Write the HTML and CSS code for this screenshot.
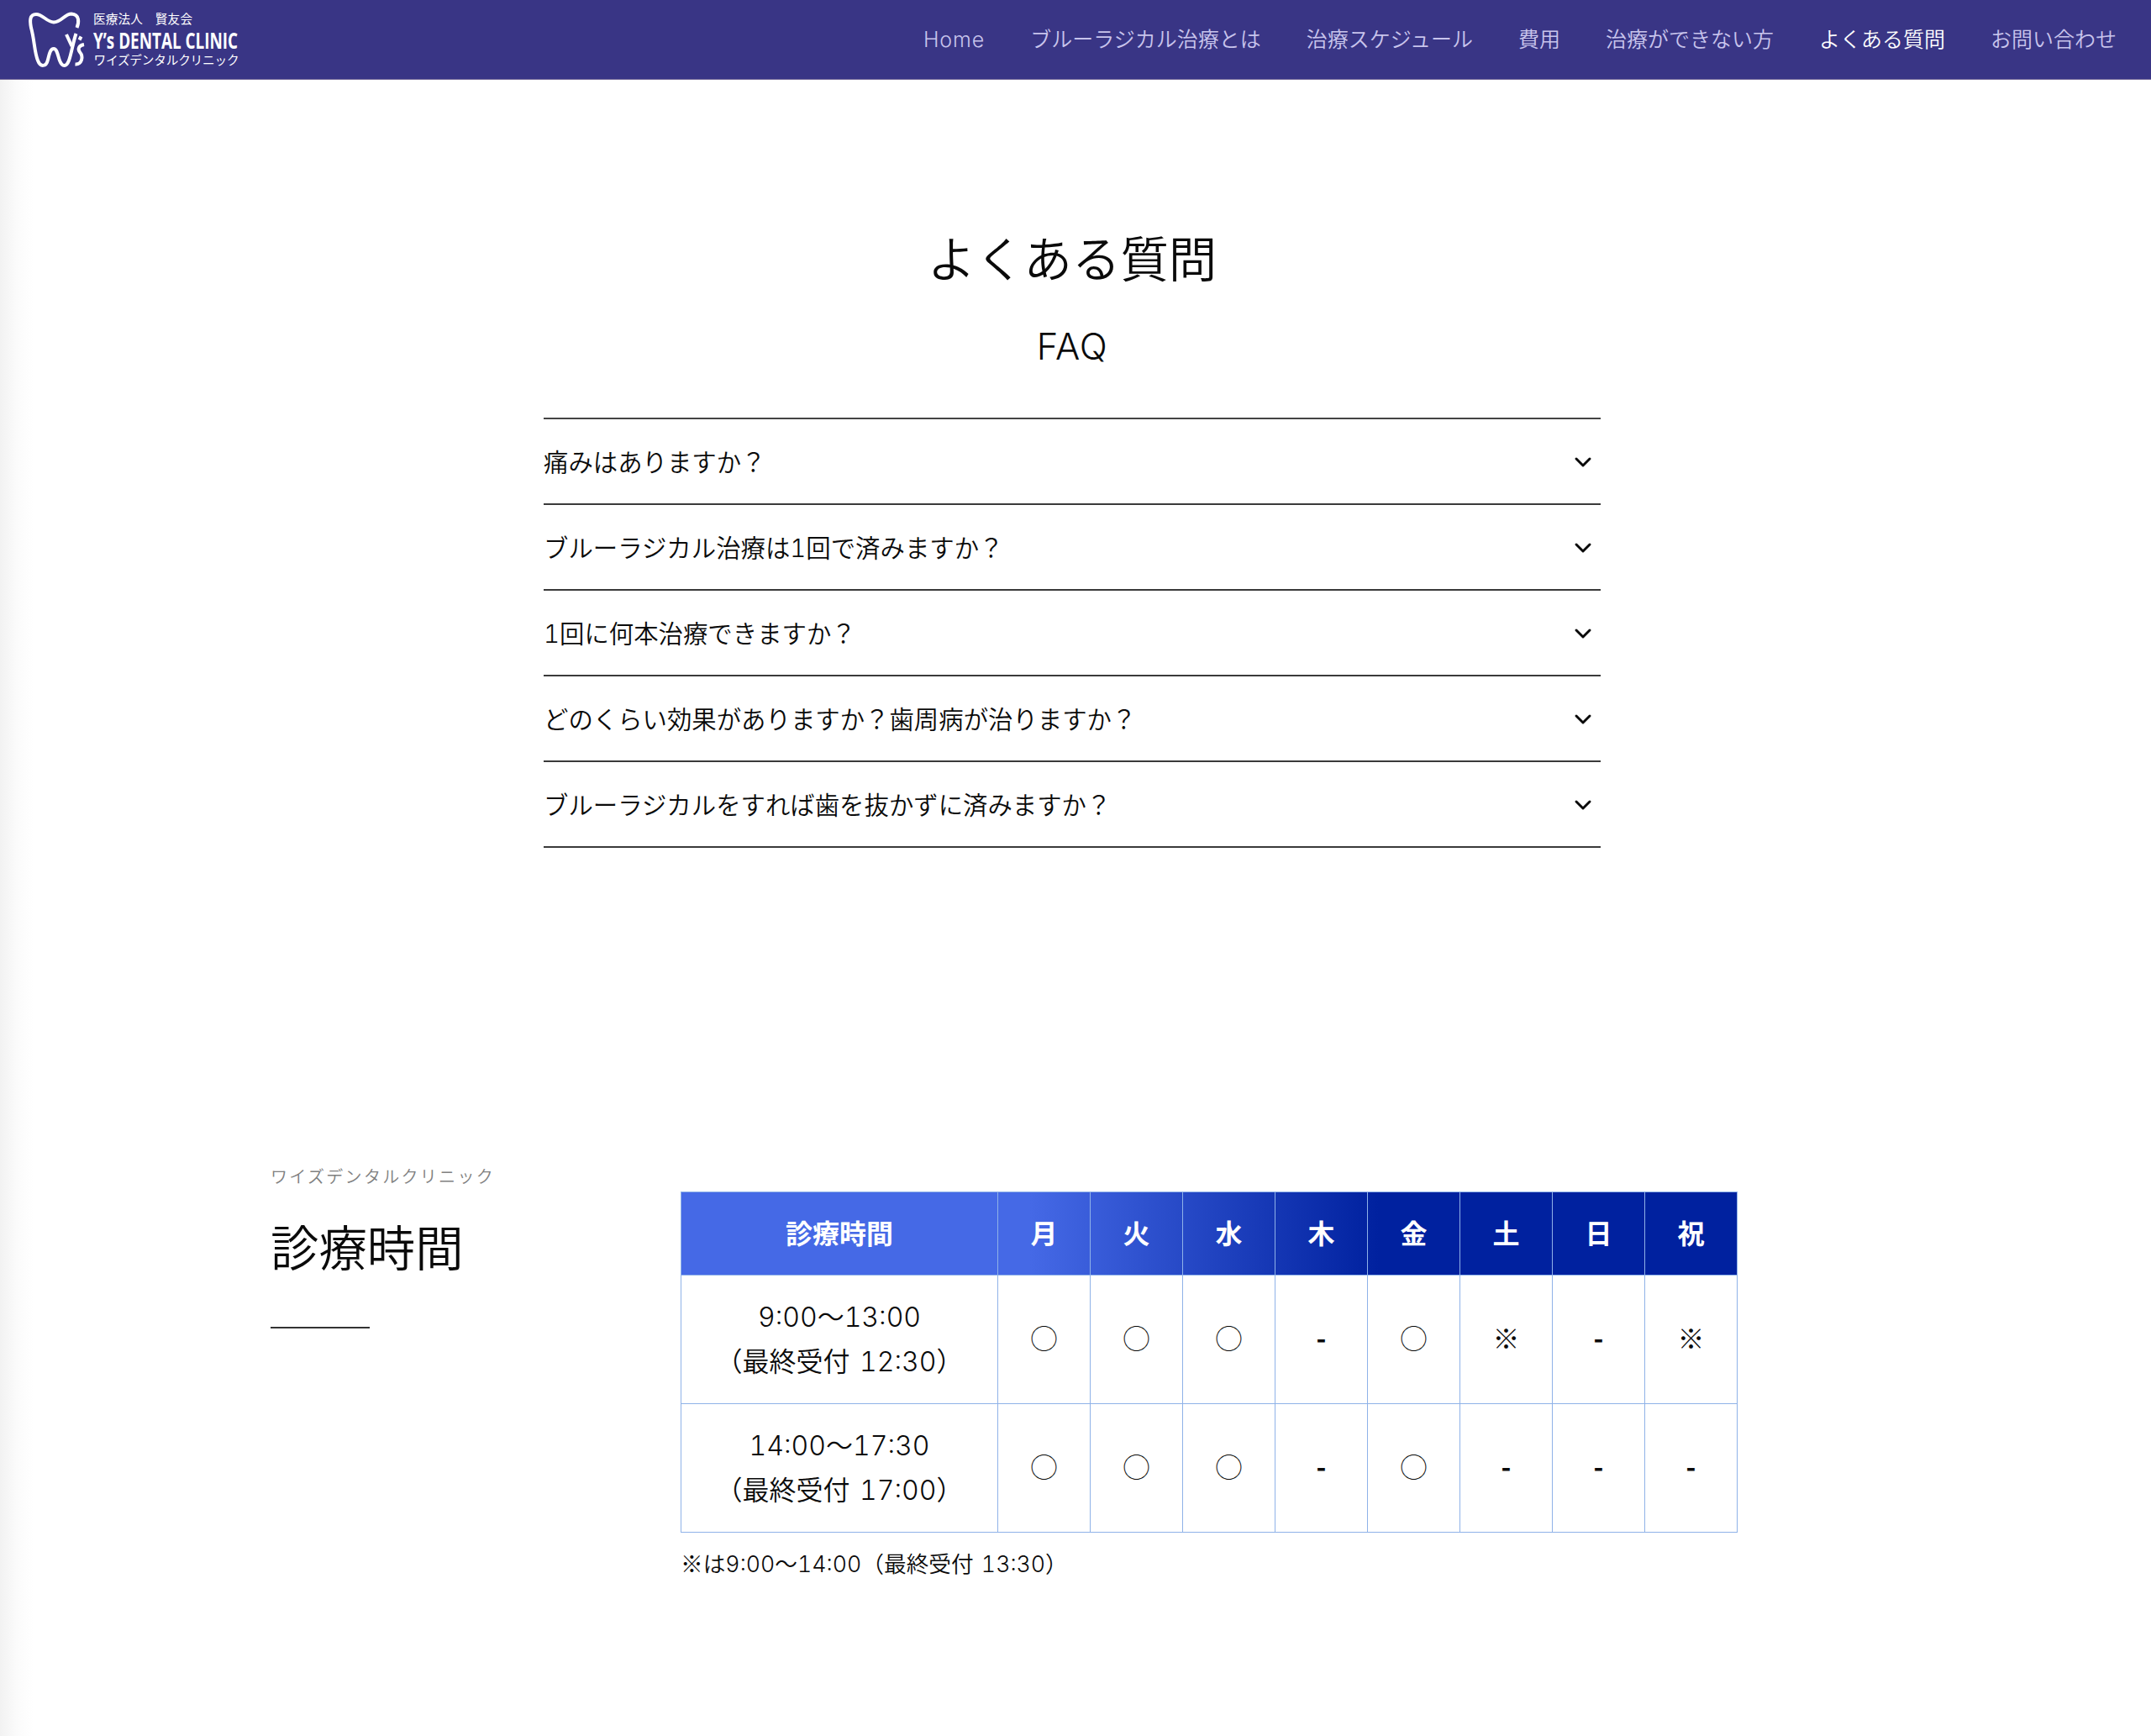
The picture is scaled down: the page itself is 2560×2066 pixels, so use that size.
FILE: index.html
```html
<!DOCTYPE html>
<html lang="ja">
<head>
	<meta charset="UTF-8">
	<meta name="viewport" content="width=device-width, initial-scale=1.0">
	<title>よくある質問</title>
	<link rel="stylesheet" href="styles.css">
</head>
<body>
<header class="header">
	<a class="logo">
		<svg width="262" height="80" viewBox="34 6 262 80">
			<g class="tooth">
				<path d="M91.500 32C94 26 95 16 85 15.500C77 15.500 73 25.500 64 25.500C56 25.500 51 16 43 16C35 16 35.500 24 37 32C41 46 41 62 45 71C48 79 55 79 57 70C59 62 60 57 64 57C68 57 69 66 71 71C74 79 79 79 82 71C85 63 87 49 90.500 39"/>
				<path d="M79 40L85.500 54"/>
				<path d="M96.500 42.500L94.500 46.500"/>
				<path d="M100 52C94 53 92 57 95 61C100 67 97 76 89.500 75.500"/>
			</g>
			<text class="logo-jp" x="111" y="27" textLength="118">医療法人　賢友会</text>
			<text class="logo-en" x="111" y="56.5" textLength="172" lengthAdjust="spacingAndGlyphs">Y’s DENTAL CLINIC</text>
			<text class="logo-jp" x="111.5" y="76" textLength="173">ワイズデンタルクリニック</text>
		</svg>
	</a>
	<ul class="nav">
		<li class="en">Home</li>
		<li>ブルーラジカル治療とは</li>
		<li>治療スケジュール</li>
		<li>費用</li>
		<li>治療ができない方</li>
		<li class="current">よくある質問</li>
		<li>お問い合わせ</li>
	</ul>
</header>
<main class="main">
	<section class="faq">
		<h2 class="title">よくある質問</h2>
		<p class="subtitle">FAQ</p>
		<ul class="faq-list">
			<li>痛みはありますか？<svg class="arrow" viewBox="0 0 22 14"><path d="M3 3l8 8 8-8"/></svg></li>
			<li>ブルーラジカル治療は1回で済みますか？<svg class="arrow" viewBox="0 0 22 14"><path d="M3 3l8 8 8-8"/></svg></li>
			<li>1回に何本治療できますか？<svg class="arrow" viewBox="0 0 22 14"><path d="M3 3l8 8 8-8"/></svg></li>
			<li>どのくらい効果がありますか？歯周病が治りますか？<svg class="arrow" viewBox="0 0 22 14"><path d="M3 3l8 8 8-8"/></svg></li>
			<li>ブルーラジカルをすれば歯を抜かずに済みますか？<svg class="arrow" viewBox="0 0 22 14"><path d="M3 3l8 8 8-8"/></svg></li>
		</ul>
	</section>
	<section class="hours">
		<div class="hours-head">
			<p class="label">ワイズデンタルクリニック</p>
			<h2 class="title">診療時間</h2>
		</div>
		<div class="hours-body">
			<table class="timetable">
				<thead>
					<tr><th class="time">診療時間</th><th>月</th><th>火</th><th>水</th><th>木</th><th>金</th><th>土</th><th>日</th><th>祝</th></tr>
				</thead>
				<tbody>
					<tr>
						<td class="time">9:00〜13:00<br>（最終受付 12:30）</td>
						<td>◯</td><td>◯</td><td>◯</td><td class="off">-</td><td>◯</td><td>※</td><td class="off">-</td><td>※</td>
					</tr>
					<tr>
						<td class="time">14:00〜17:30<br>（最終受付 17:00）</td>
						<td>◯</td><td>◯</td><td>◯</td><td class="off">-</td><td>◯</td><td class="off">-</td><td class="off">-</td><td class="off">-</td>
					</tr>
				</tbody>
			</table>
			<p class="note"><span class="mark">※</span>は9:00〜14:00（最終受付 13:30）</p>
		</div>
	</section>
</main>
</body>
</html>
```
FILE: styles.css
```css
* {
	box-sizing: border-box;
	margin: 0;
	padding: 0;
}
body {
	background: #fff;
	color: #0a0a0a;
	font-family: Inter, "Noto Sans CJK JP", sans-serif;
	font-weight: 350;
	font-variant-numeric: tabular-nums;
}
ul {
	list-style: none;
}

/* header */
.header {
	display: flex;
	justify-content: space-between;
	align-items: center;
	height: 95px;
	padding: 0 41px 0 34px;
	background: #393585;
	border-bottom: 1px solid #7a6f9c;
}
.logo svg {
	display: block;
	overflow: visible;
}
.tooth {
	fill: none;
	stroke: #fff;
	stroke-width: 4;
	stroke-linejoin: round;
}
.logo-jp {
	fill: #fff;
	font: 400 14.6px "Noto Sans CJK JP", sans-serif;
}
.logo-en {
	fill: #fff;
	font: 700 26px "Open Sans", sans-serif;
}
.nav {
	display: flex;
	gap: 54px;
	color: #c8c4ec;
	font-size: 25px;
	line-height: 36px;
}
.nav .en {
	letter-spacing: .9px;
}
.nav .current {
	color: #fff;
}

.main {
	height: 1971px;
	background: linear-gradient(to right, #f2f2f2, #fbfbfb 20px, #fff 40px);
}
.title {
	font-size: 57.4px;
	font-weight: 350;
	line-height: 80px;
}

/* faq */
.faq {
	width: 1258px;
	margin-left: 647px;
	padding-top: 174px;
}
.faq .title,
.subtitle {
	text-align: center;
}
.subtitle {
	margin-top: 33px;
	font-size: 43.5px;
	letter-spacing: .6px;
	line-height: 60px;
}
.faq-list {
	margin-top: 55px;
	border-top: 2px solid #444;
}
.faq-list li {
	display: flex;
	justify-content: space-between;
	align-items: center;
	height: 102px;
	padding: 0 10px 3px 0;
	border-bottom: 2px solid #3a3a3a;
	font-size: 29.4px;
}
.arrow {
	width: 22px;
	height: 14px;
	margin-top: 4px;
	fill: none;
	stroke: #0a0a0a;
	stroke-width: 3;
	stroke-linecap: round;
	stroke-linejoin: round;
}

/* hours */
.hours {
	display: flex;
	width: 1746px;
	margin: 377px 0 0 322px;
}
.hours-head {
	width: 488px;
}
.label {
	color: #808080;
	font-size: 20px;
	letter-spacing: 2.3px;
	line-height: 30px;
}
.hours-head .title {
	margin-top: 30px;
}
.hours-head .title::after {
	content: "";
	display: block;
	width: 118px;
	height: 2px;
	margin-top: 53px;
	background: #333;
}
.hours-body {
	width: 1258px;
	padding-top: 32px;
}
.timetable {
	width: 100%;
	border-collapse: collapse;
	table-layout: fixed;
	font-size: 32px;
	line-height: 53px;
	text-align: center;
}
.timetable thead {
	background: linear-gradient(to right, #4569e6 33%, #00219f 66%);
	color: #fff;
}
.timetable th,
.timetable td {
	padding-bottom: 5px;
	border: 1px solid #8fb2e8;
	font-family: "Noto Sans CJK JP", sans-serif;
}
.timetable th {
	height: 99px;
	padding-bottom: 3px;
	font-weight: 700;
}
.timetable td {
	height: 153px;
}
.timetable .off {
	font-weight: 700;
}
.timetable .time {
	width: 377px;
	padding-bottom: 0;
	font-family: Inter, "Noto Sans CJK JP", sans-serif;
	word-spacing: 3px;
}
.note {
	margin-top: 16px;
	font-size: 26.7px;
	line-height: 40px;
	word-spacing: 2px;
}
.mark {
	font-family: "Noto Sans CJK JP", sans-serif;
}
```
